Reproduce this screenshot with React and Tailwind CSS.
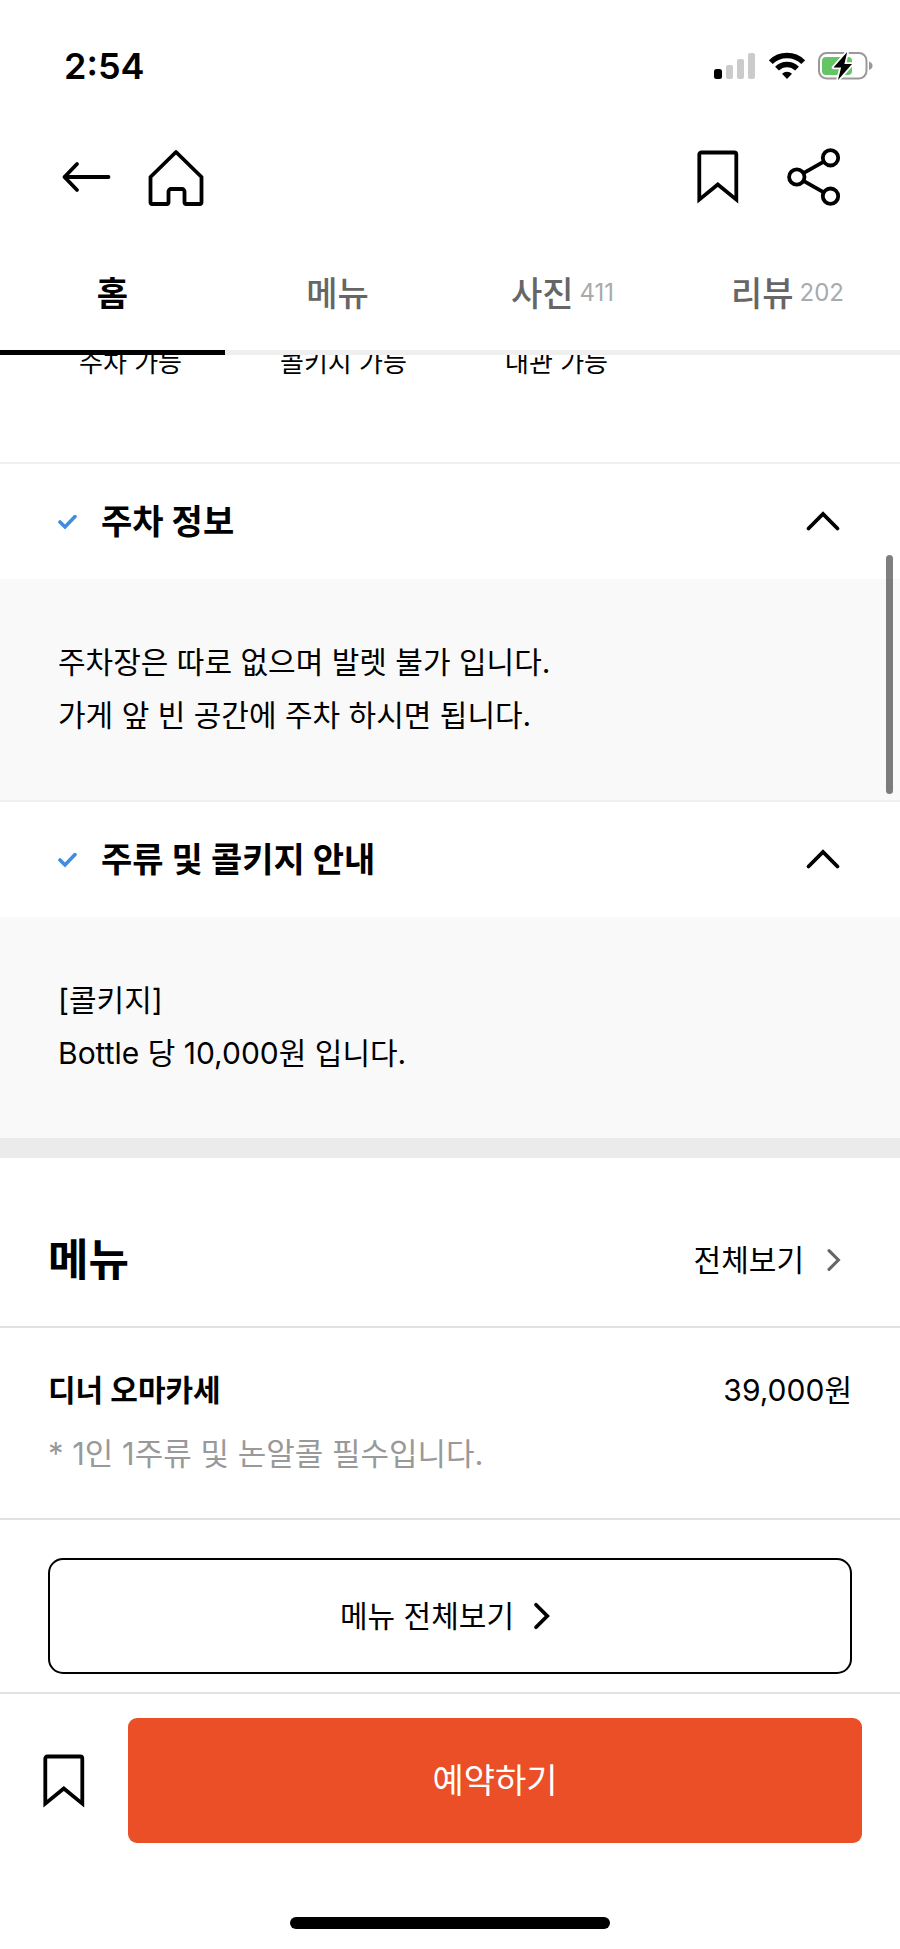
import { useState } from 'react';

const TABS = [
  { id: 'home', label: '홈' },
  { id: 'menu', label: '메뉴' },
  { id: 'photo', label: '사진', count: 411 },
  { id: 'review', label: '리뷰', count: 202 },
];

const FACILITIES = ['주차 가능', '콜키지 가능', '대관 가능'];

const INFOS = [
  {
    id: 'parking',
    title: '주차 정보',
    lines: ['주차장은 따로 없으며 발렛 불가 입니다.', '가게 앞 빈 공간에 주차 하시면 됩니다.'],
  },
  {
    id: 'corkage',
    title: '주류 및 콜키지 안내',
    lines: ['[콜키지]', 'Bottle 당 10,000원 입니다.'],
  },
];

const MENUS = [
  { name: '디너 오마카세', price: '39,000원', desc: '* 1인 1주류 및 논알콜 필수입니다.' },
];

// Status bar icons
const IconSignal = () => (
  <svg width="42" height="28" viewBox="0 0 42 28">
    <rect x="0" y="17" width="8" height="10" rx="2.5" fill="#000" />
    <rect x="12" y="13" width="7" height="14" rx="2" fill="#cbcbcb" />
    <rect x="23" y="7" width="7" height="20" rx="2" fill="#cbcbcb" />
    <rect x="34" y="1" width="7" height="26" rx="2" fill="#cbcbcb" />
  </svg>
);

const IconWifi = () => (
  <svg width="36" height="28" viewBox="0 0 36 28" fill="none" stroke="#000" strokeWidth="5.4">
    <path d="M1.8 10.2a23 23 0 0 1 32.4 0" />
    <path d="M8 16.6a14.2 14.2 0 0 1 20 0" />
    <path d="M18 27l-5-5.2a7.2 7.2 0 0 1 10 0z" fill="#000" stroke="none" />
  </svg>
);

const IconBattery = () => (
  <svg width="56" height="28" viewBox="0 0 56 28">
    <rect x="1" y="1" width="47.5" height="25.5" rx="7.5" fill="none" stroke="#999" strokeWidth="2" />
    <path d="M51 9.5q3.5 1.2 3.5 4.3t-3.5 4.3z" fill="#999" />
    <rect x="4" y="5" width="30" height="18" rx="4" fill="#65c466" />
    <path
      d="M29.2 0L15.5 15.5h7.6L20 28l14-16h-7.6z"
      fill="#000" stroke="#fff" strokeWidth="3.5" strokeLinejoin="round" paintOrder="stroke"
    />
  </svg>
);

// Header icons
const IconBack = () => (
  <svg width="50" height="32" viewBox="0 0 50 32" fill="none" stroke="#000" strokeWidth="3.8" strokeLinecap="round" strokeLinejoin="round">
    <path d="M47.5 16H3.5M16 3L3.5 16L16 29" />
  </svg>
);

const IconHome = () => (
  <svg width="56" height="58" viewBox="0 0 56 58" fill="none" stroke="#000" strokeWidth="3.8" strokeLinecap="round" strokeLinejoin="round">
    <path d="M28 4L53.5 29V54.5a1.5 1.5 0 0 1-1.5 1.5H38a1.5 1.5 0 0 1-1.5-1.5V43.5a2.5 2.5 0 0 0-2.5-2.5H23a2.5 2.5 0 0 0-2.5 2.5V54.5A1.5 1.5 0 0 1 19 56H4a1.5 1.5 0 0 1-1.5-1.5V29z" />
  </svg>
);

const IconBookmark = () => (
  <svg width="42" height="54" viewBox="0 0 42 54" fill="none" stroke="#000" strokeWidth="3.8">
    <path d="M2.3 49.6V4.5a2 2 0 0 1 2-2h33a2 2 0 0 1 2 2v45.1L20.8 34.5z" />
  </svg>
);

const IconShare = () => (
  <svg width="54" height="58" viewBox="0 0 54 58" fill="none" stroke="#000" strokeWidth="3.8">
    <circle cx="43.5" cy="9.8" r="7.7" />
    <circle cx="9.8" cy="29" r="7.7" />
    <circle cx="43.5" cy="48.2" r="7.7" />
    <path d="M16.5 25.2l20.3-11.6M16.5 32.8l20.3 11.6" />
  </svg>
);

const IconCheck = () => (
  <svg width="20" height="16" viewBox="0 0 20 16" fill="none" stroke="#418ce3" strokeWidth="3.6" strokeLinecap="round">
    <path d="M3 8l5 5L18 2.6" />
  </svg>
);

const IconChevronUp = ({ open }) => (
  <svg className={open ? '' : 'rotate-180'} width="36" height="22" viewBox="0 0 36 22" fill="none" stroke="#000" strokeWidth="3.8" strokeLinecap="round">
    <path d="M3.500 17.500L18 3l14.500 14.500" />
  </svg>
);

const IconChevronRight = ({ color = '#000', size = 36 }) => (
  <svg width="36" height={size} viewBox="0 0 24 24" fill="none" stroke={color} strokeWidth="2.5" strokeLinecap="round">
    <path d="M8 4.5l7.500 7.500L8 19.500" />
  </svg>
);

function StatusBar() {
  return (
    <div className="flex h-[118px] items-center justify-between pt-3.5 pr-[26px] pl-16">
      <span className="text-[36px] leading-10 font-semibold">2:54</span>
      <div className="flex items-center gap-[13px]">
        <IconSignal />
        <IconWifi />
        <IconBattery />
      </div>
    </div>
  );
}

function InfoPanel({ title, lines }) {
  const [open, setOpen] = useState(true);

  return (
    <section className="border-t-2 border-[#efefef]">
      <h3>
        <button
          type="button"
          aria-expanded={open}
          onClick={() => setOpen(!open)}
          className="flex h-[115px] w-full items-center gap-6 pr-[59px] pl-[57px] text-left text-[34px] font-bold"
        >
          <IconCheck />
          <span className="flex-1">{title}</span>
          <IconChevronUp open={open} />
        </button>
      </h3>
      {open && (
        <div className="bg-[#f9f9f9] px-[58px] pt-[57px] pb-[58px] text-[30px] leading-[53px]">
          {lines.map((line) => (
            <p key={line}>{line}</p>
          ))}
        </div>
      )}
    </section>
  );
}

export default function App() {
  const [tab, setTab] = useState('home');

  return (
    <div className="relative min-h-screen bg-white font-['Inter','Noto_Sans_CJK_KR',sans-serif] text-black">
      <header className="relative z-10 bg-white">
        <StatusBar />

        <div className="flex h-[118px] items-center justify-between pr-[59px] pl-[61px]">
          <div className="flex items-center gap-[37px]">
            <button type="button" aria-label="뒤로"><IconBack /></button>
            <button type="button" aria-label="홈으로"><IconHome /></button>
          </div>
          <div className="flex items-center gap-12">
            <button type="button" aria-label="저장"><IconBookmark /></button>
            <button type="button" aria-label="공유"><IconShare /></button>
          </div>
        </div>

        <nav className="grid grid-cols-4">
          {TABS.map(({ id, label, count }) => (
            <button
              key={id}
              type="button"
              onClick={() => setTab(id)}
              className={`flex h-[119px] items-center justify-center gap-1.5 border-b-5 text-[34px] ${
                tab === id ? 'border-black font-bold text-black' : 'border-[#efefef] font-medium text-[#666]'
              }`}
            >
              {label}
              {count && <span className="text-[24px] font-normal text-[#aaa]">{count}</span>}
            </button>
          ))}
        </nav>
      </header>

      <main>
        {/* Facilities row, partly scrolled under the header */}
        <ul className="-mt-2.5 grid grid-cols-4 px-6 pb-[81px] text-center text-[26px] leading-9">
          {FACILITIES.map((name) => (
            <li key={name}>{name}</li>
          ))}
        </ul>

        {INFOS.map((info) => (
          <InfoPanel key={info.id} title={info.title} lines={info.lines} />
        ))}

        <div className="h-5 bg-[#ebebeb]" />

        <section>
          <div className="flex items-center justify-between px-12 pt-16 pb-7">
            <h2 className="text-[44px] leading-[76px] font-bold">메뉴</h2>
            <a href="#menu" className="flex items-center gap-3 text-[30px]">
              전체보기
              <IconChevronRight color="#666" size={30} />
            </a>
          </div>

          <ul>
            {MENUS.map(({ name, price, desc }) => (
              <li key={name} className="border-y-2 border-[#e1e1e1] px-12 pt-9 pb-[38px] text-[30px] leading-[52px]">
                <div className="flex justify-between">
                  <h3 className="font-bold">{name}</h3>
                  <span>{price}</span>
                </div>
                <p className="mt-3 text-[31px] text-[#999]">{desc}</p>
              </li>
            ))}
          </ul>

          <div className="px-12 pt-[38px] pb-[18px]">
            <button
              type="button"
              className="flex h-[116px] w-full items-center justify-center gap-2.5 rounded-[15px] border-2 border-black text-[30px]"
            >
              메뉴 전체보기
              <IconChevronRight />
            </button>
          </div>
        </section>
      </main>

      <footer className="border-t-2 border-[#e1e1e1] bg-white pt-6 pb-5">
        <div className="flex items-center gap-[43px] pr-[38px] pl-[43px]">
          <button type="button" aria-label="저장"><IconBookmark /></button>
          <button type="button" className="h-[125px] flex-1 rounded-[9px] bg-[#ea4f27] text-[34px] text-white">
            예약하기
          </button>
        </div>
        <div className="mx-auto mt-[74px] h-3 w-80 rounded-full bg-black" />
      </footer>

      {/* Scroll thumb */}
      <div className="absolute top-[555px] right-[7px] h-[239px] w-[7px] rounded-full bg-black/50" />
    </div>
  );
}
